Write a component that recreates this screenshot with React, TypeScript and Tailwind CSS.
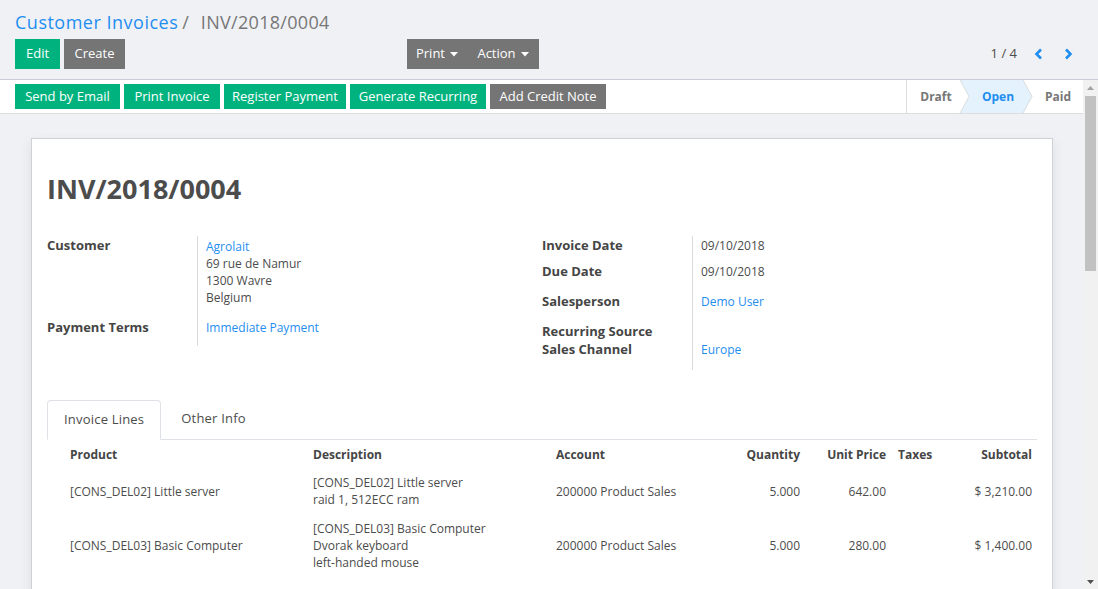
import React from 'react';

const font = { fontFamily: '"Open Sans", "Liberation Sans", sans-serif' };

const Caret = () => (
  <svg width="8" height="5" viewBox="0 0 8 5" className="ml-[5px] inline-block">
    <path d="M0 0 L8 0 L4 4.5 Z" fill="currentColor" />
  </svg>
);

const Chevron = ({ dir }: { dir: 'left' | 'right' }) => (
  <svg width="9" height="12" viewBox="0 0 9 12">
    {dir === 'left' ? (
      <path d="M7 1.5 L2.5 6 L7 10.5" stroke="#1f8ef1" strokeWidth="2.6" fill="none" />
    ) : (
      <path d="M2 1.5 L6.5 6 L2 10.5" stroke="#1f8ef1" strokeWidth="2.6" fill="none" />
    )}
  </svg>
);

interface RowProps {
  label: string;
  h: string;
  children?: React.ReactNode;
  valueClass?: string;
}

const Field: React.FC<RowProps> = ({ label, h, children, valueClass = '' }) => (
  <div className={`flex ${h}`}>
    <div className="w-[150px] shrink-0 pt-[1px] font-bold text-[13px] leading-[17px] text-[#454545]">{label}</div>
    <div className={`flex-1 border-l border-[#d9d9d9] pl-[8px] text-[12px] leading-[17px] text-[#4c4c4c] ${valueClass}`}>
      {children}
    </div>
  </div>
);

const lines = [
  {
    product: '[CONS_DEL02] Little server',
    desc: ['[CONS_DEL02] Little server', 'raid 1, 512ECC ram'],
    account: '200000 Product Sales',
    qty: '5.000',
    price: '642.00',
    subtotal: '$ 3,210.00',
  },
  {
    product: '[CONS_DEL03] Basic Computer',
    desc: ['[CONS_DEL03] Basic Computer', 'Dvorak keyboard', 'left-handed mouse'],
    account: '200000 Product Sales',
    qty: '5.000',
    price: '280.00',
    subtotal: '$ 1,400.00',
  },
];

const cols = 'grid grid-cols-[243px_243px_172px_88px_86px_51px_92px]';

// classic scrollbar drawn by hand, the headless browser hides the native one
const Scrollbar = () => (
  <div className="w-[15px] h-full bg-[#f1f1f1] flex flex-col">
    <div className="h-[15px] flex items-center justify-center">
      <svg width="7" height="4" viewBox="0 0 7 4">
        <path d="M0 4 L3.5 0 L7 4 Z" fill="#a3a3a3" />
      </svg>
    </div>
    <div className="flex-1 px-[2px]">
      <div className="mt-[1px] h-[175px] bg-[#c1c1c1]"></div>
    </div>
    <div className="h-[15px] flex items-center justify-center">
      <svg width="7" height="4" viewBox="0 0 7 4">
        <path d="M0 0 L7 0 L3.5 4 Z" fill="#505050" />
      </svg>
    </div>
  </div>
);

export default function App() {
  return (
    <div className="w-[1098px] h-[589px] overflow-hidden bg-[#f0f1f5] text-[#4c4c4c]" style={font}>
      {/* control panel */}
      <div className="h-[80px] border-b border-[#c9ccd6] bg-[#f0f1f5] px-[15px]">
        <div className="pt-[10px] text-[18px] leading-[24px] flex items-center">
          <span className="text-[#1f8ef1] tracking-[0.5px]">Customer Invoices</span>
          <span className="text-[#777] ml-[4px]">/</span>
          <span className="text-[#777] ml-[12px] tracking-[0.3px]">INV/2018/0004</span>
        </div>
        <div className="mt-[5px] flex items-center">
          <button className="h-[30px] w-[45px] bg-[#00b37e] text-white text-[13px]">Edit</button>
          <button className="h-[30px] w-[61px] ml-[4px] bg-[#757575] text-white text-[13px]">Create</button>
          <div className="ml-[282px] flex h-[30px] bg-[#757575] text-white text-[13px]">
            <button className="w-[60px] flex items-center justify-center">
              Print
              <Caret />
            </button>
            <button className="w-[72px] flex items-center justify-center">
              Action
              <Caret />
            </button>
          </div>
          <div className="ml-auto mr-[3px] flex items-center text-[13px] text-[#4c4c4c]">
            <span className="mr-[9px]">1 / 4</span>
            <button className="w-[24px] flex justify-center">
              <Chevron dir="left" />
            </button>
            <button className="w-[24px] ml-[6px] flex justify-center">
              <Chevron dir="right" />
            </button>
          </div>
        </div>
      </div>

      {/* form area with its scrollbar */}
      <div className="h-[509px] flex">
        <div className="w-[1083px] h-full overflow-hidden">
          <div className="h-[34px] border-b border-[#dcdcdc] bg-white flex">
            <div className="flex gap-[4px] pl-[15px] pt-[4px]">
              <button className="h-[25px] w-[105px] bg-[#00b37e] text-white text-[13px]">Send by Email</button>
              <button className="h-[25px] w-[96px] bg-[#00b37e] text-white text-[13px]">Print Invoice</button>
              <button className="h-[25px] w-[122px] bg-[#00b37e] text-white text-[13px]">Register Payment</button>
              <button className="h-[25px] w-[136px] bg-[#00b37e] text-white text-[13px]">Generate Recurring</button>
              <button className="h-[25px] w-[116px] bg-[#757575] text-white text-[13px]">Add Credit Note</button>
            </div>
            <div className="ml-auto relative w-[177px] h-[33px] border-l border-[#dcdcdc] flex text-[12px] font-bold">
              <svg className="absolute inset-0" width="177" height="33" viewBox="0 0 177 33">
                <polygon points="53,0 116,0 125,16.5 116,33 53,33 62,16.5" fill="#e3f2fd" />
                <polyline points="53,0 62,16.5 53,33" stroke="#dcdcdc" fill="none" />
                <polyline points="116,0 125,16.5 116,33" stroke="#dcdcdc" fill="none" />
              </svg>
              <div className="relative w-[58px] flex items-center justify-center text-[#777]">Draft</div>
              <div className="relative w-[66px] flex items-center justify-center text-[#1f8ef1]">Open</div>
              <div className="relative flex-1 flex items-center justify-center pl-[2px] text-[#777]">Paid</div>
            </div>
          </div>

          {/* sheet */}
          <div className="mt-[24px] ml-[31px] w-[1022px] min-h-[600px] bg-white border border-[#cfd0d8] shadow-[0_4px_12px_rgba(0,0,0,0.08)] px-[15px] pt-[34px] pb-[40px]">
            <h1 className="text-[27px] leading-[32px] font-bold text-[#4c4c4c]">INV/2018/0004</h1>

            <div className="mt-[31px] grid grid-cols-2">
              <div>
                <Field label="Customer" h="h-[82px]" valueClass="pt-[2px]">
                  <div className="text-[#1f8ef1]">Agrolait</div>
                  <div>69 rue de Namur</div>
                  <div>1300 Wavre</div>
                  <div>Belgium</div>
                </Field>
                <Field label="Payment Terms" h="h-[28px]" valueClass="pt-[1px]">
                  <span className="text-[#1f8ef1]">Immediate Payment</span>
                </Field>
              </div>
              <div>
                <Field label="Invoice Date" h="h-[26px]" valueClass="pt-[1px]">
                  09/10/2018
                </Field>
                <Field label="Due Date" h="h-[30px]" valueClass="pt-[1px]">
                  09/10/2018
                </Field>
                <Field label="Salesperson" h="h-[30px]" valueClass="pt-[1px]">
                  <span className="text-[#1f8ef1]">Demo User</span>
                </Field>
                <Field label="Recurring Source" h="h-[18px]" />
                <Field label="Sales Channel" h="h-[30px]" valueClass="pt-[1px]">
                  <span className="text-[#1f8ef1]">Europe</span>
                </Field>
              </div>
            </div>

            {/* tabs */}
            <div className="mt-[30px] h-[40px] border-b border-[#dee2e6] flex items-end text-[13px]">
              <div className="h-[40px] -mb-px px-[16px] flex items-center border border-[#dee2e6] border-b-white bg-white rounded-t-[4px] text-[#4c4c4c] tracking-[0.2px]">
                Invoice Lines
              </div>
              <div className="h-[40px] ml-[4px] px-[16px] flex items-center text-[#4c4c4c] tracking-[0.2px]">Other Info</div>
            </div>

            {/* lines */}
            <div className="pl-[15px] text-[12px] leading-[17px]">
              <div className={`${cols} h-[28px] items-center font-bold text-[#454545]`}>
                <div className="px-2">Product</div>
                <div className="px-2">Description</div>
                <div className="px-2">Account</div>
                <div className="px-2 text-right">Quantity</div>
                <div className="px-2 text-right">Unit Price</div>
                <div className="pl-[4px]">Taxes</div>
                <div className="pl-2 pr-[5px] text-right">Subtotal</div>
              </div>
              {lines.map((l) => (
                <div key={l.product} className={`${cols} items-center py-[6px]`}>
                  <div className="px-2">{l.product}</div>
                  <div className="px-2">
                    {l.desc.map((d) => (
                      <div key={d}>{d}</div>
                    ))}
                  </div>
                  <div className="px-2">{l.account}</div>
                  <div className="px-2 text-right">{l.qty}</div>
                  <div className="px-2 text-right">{l.price}</div>
                  <div className="pl-[4px]"></div>
                  <div className="pl-2 pr-[5px] text-right">{l.subtotal}</div>
                </div>
              ))}
            </div>
          </div>
        </div>
        <Scrollbar />
      </div>
    </div>
  );
}
